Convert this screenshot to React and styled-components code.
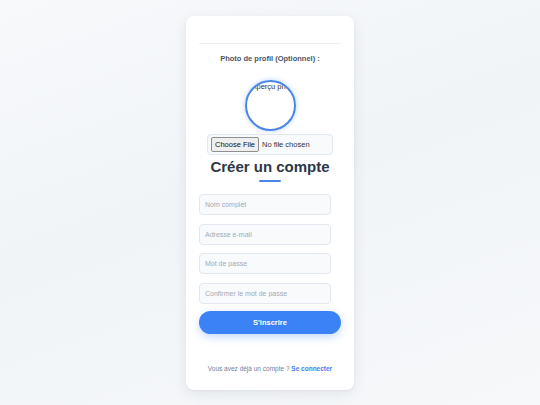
import React from "react";
import styled, { createGlobalStyle } from "styled-components";

const GlobalStyle = createGlobalStyle`
  html, body {
    margin: 0;
    padding: 0;
  }
  body {
    font-family: "Liberation Sans", Arial, sans-serif;
    background: #f4f6f9;
  }
`;

const Page = styled.div`
  width: 540px;
  height: 405px;
  display: flex;
  justify-content: center;
  align-items: flex-start;
  padding-top: 16px;
  box-sizing: border-box;
  background: linear-gradient(160deg, #f7f9fb 0%, #f1f4f7 45%, #f6f8fa 100%);
  overflow: hidden;
`;

const Card = styled.div`
  width: 168px;
  box-sizing: border-box;
  background: #ffffff;
  border-radius: 8px;
  box-shadow: 0 4px 14px rgba(30, 41, 59, 0.08), 0 1px 3px rgba(30, 41, 59, 0.05);
  padding: 27px 13px 17px 13px;
  display: flex;
  flex-direction: column;
`;

const Divider = styled.div`
  height: 1px;
  background: #edf0f3;
`;

const PhotoLabel = styled.div`
  margin-top: 10px;
  font-size: 7.5px;
  line-height: 10px;
  font-weight: bold;
  color: #4a5568;
  text-align: center;
`;

const Avatar = styled.div`
  align-self: center;
  margin-top: 16px;
  width: 51px;
  height: 51px;
  box-sizing: border-box;
  border: 2px solid #4a86e8;
  border-radius: 50%;
  overflow: hidden;
  box-shadow: 0 0 5px rgba(59, 130, 246, 0.35);
  font-size: 7.5px;
  line-height: 9px;
  color: #333;
  padding-left: 5px;
  white-space: nowrap;
`;

const FileBox = styled.div`
  align-self: center;
  margin-top: 3px;
  width: 126px;
  height: 21px;
  box-sizing: border-box;
  background: #f8fafc;
  border: 1px solid #e2e8f0;
  border-radius: 4px;
  display: flex;
  align-items: center;
  padding-left: 3px;
`;

const FileInput = styled.input`
  font-family: "Liberation Sans", Arial, sans-serif;
  font-size: 7.5px;
  color: #333;
  width: 118px;

  &::file-selector-button {
    font-family: "Liberation Sans", Arial, sans-serif;
    font-size: 7.5px;
    padding: 2px 3px;
    margin-right: 3px;
    border: 1px solid #8f8f8f;
    border-radius: 2px;
    background: #efefef;
    color: #111;
  }
`;

const Title = styled.h1`
  margin: 3px 0 0 0;
  font-size: 15px;
  line-height: 18px;
  font-weight: bold;
  color: #2d3748;
  text-align: center;
`;

const TitleBar = styled.div`
  align-self: center;
  margin-top: 4px;
  width: 22px;
  height: 2px;
  border-radius: 1px;
  background: #4a86e8;
`;

const Fields = styled.div`
  margin-top: 12px;
  display: flex;
  flex-direction: column;
  gap: 8.5px;
`;

const Field = styled.input`
  width: 132px;
  height: 21px;
  box-sizing: border-box;
  background: #f8fafc;
  border: 1px solid #e2e8f0;
  border-radius: 4px;
  padding: 0 5px;
  font-family: "Liberation Sans", Arial, sans-serif;
  font-size: 7px;
  color: #2d3748;
  outline: none;

  &::placeholder {
    color: #a0aab8;
  }
`;

const SubmitButton = styled.button`
  margin-top: 7.5px;
  height: 23px;
  width: 100%;
  border: none;
  border-radius: 12px;
  background: #3b82f6;
  color: #ffffff;
  font-family: "Liberation Sans", Arial, sans-serif;
  font-size: 7.5px;
  font-weight: bold;
  box-shadow: 0 3px 8px rgba(59, 130, 246, 0.3);
  cursor: pointer;
`;

const Footer = styled.div`
  margin-top: 30px;
  font-size: 6.5px;
  line-height: 9px;
  color: #718096;
  text-align: center;
`;

const Link = styled.a`
  color: #3b82f6;
  font-weight: bold;
  text-decoration: none;
`;

const App = () => {
  return (
    <>
      <GlobalStyle />
      <Page>
        <Card>
          <Divider />
          <PhotoLabel>Photo de profil (Optionnel) :</PhotoLabel>
          <Avatar>Aperçu photo</Avatar>
          <FileBox>
            <FileInput type="file" accept="image/*" />
          </FileBox>
          <Title>Créer un compte</Title>
          <TitleBar />
          <Fields>
            <Field type="text" placeholder="Nom complet" />
            <Field type="email" placeholder="Adresse e-mail" />
            <Field type="password" placeholder="Mot de passe" />
            <Field type="password" placeholder="Confirmer le mot de passe" />
          </Fields>
          <SubmitButton>S'inscrire</SubmitButton>
          <Footer>
            Vous avez déjà un compte ? <Link href="#">Se connecter</Link>
          </Footer>
        </Card>
      </Page>
    </>
  );
};

export default App;
